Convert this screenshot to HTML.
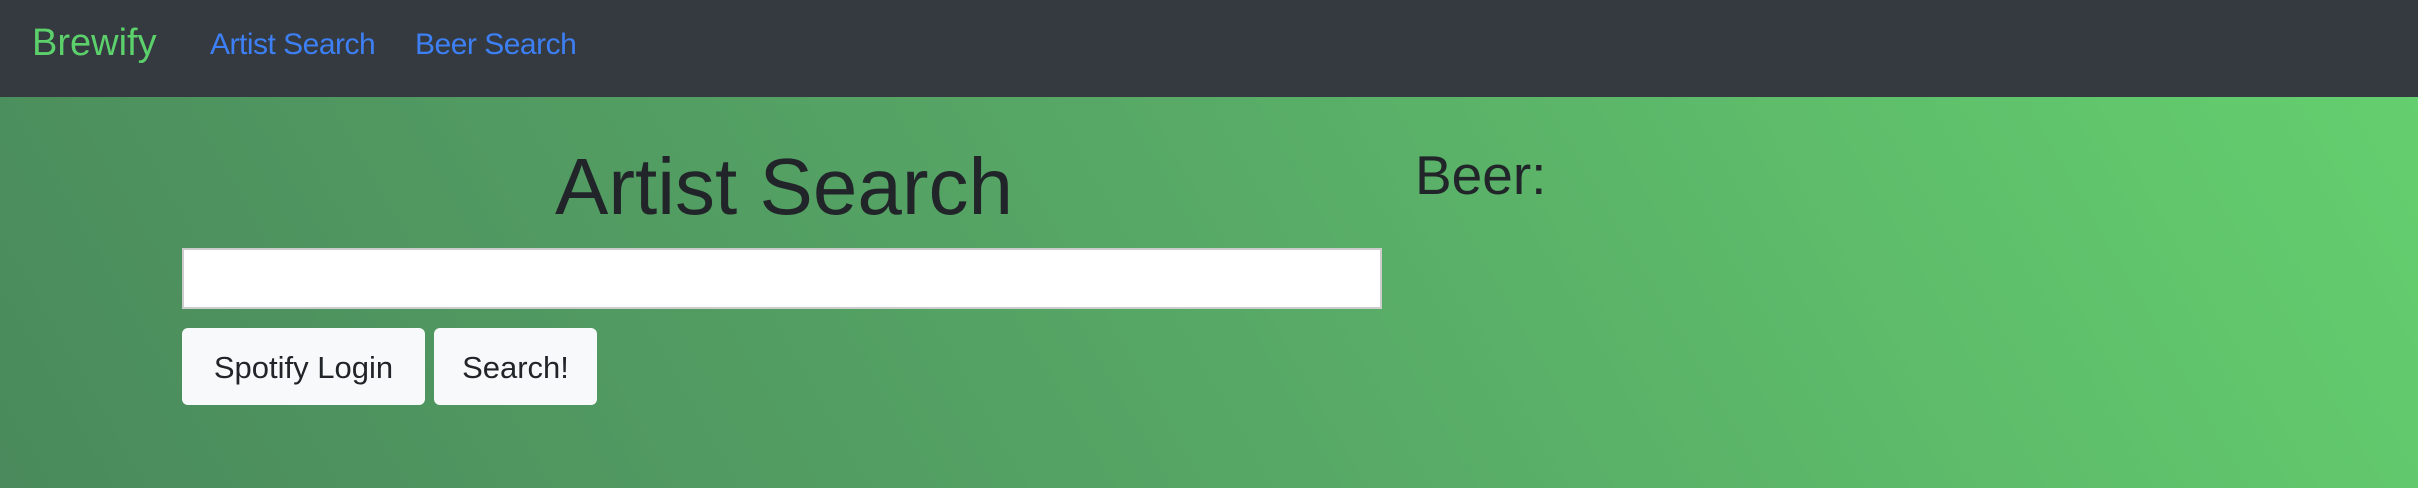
<!DOCTYPE html>
<html><head><style>
body{margin:0;width:2418px;height:488px;overflow:hidden;font-family:"Liberation Sans",sans-serif;}
.nav{height:97px;background:#343a40;position:relative}
.nav span{position:absolute;top:28px;font-size:30px}
.main{position:relative;height:391px;background:linear-gradient(60deg,#4a8a5c 0%,#57a866 50%,#64cf6e 100%)}
.h{position:absolute;left:520px;top:44px;width:528px;text-align:center;font-size:80px;color:#212529}
.beer{position:absolute;left:1415px;top:46px;font-size:55px;color:#212529}
.in{position:absolute;left:182px;top:151px;width:1196px;height:57px;background:#fff;border:2px solid #ccc}
.b{position:absolute;top:231px;height:77px;background:#f8f9fa;border-radius:6px;font-size:31px;color:#212529;line-height:79px;text-align:center}
</style></head><body>
<div class="nav">
<span style="left:32px;top:22px;font-size:38px;color:#5cd06b">Brewify</span>
<span style="left:210px;color:#3d7ff5;letter-spacing:-0.5px">Artist Search</span>
<span style="left:415px;color:#3d7ff5;letter-spacing:-0.5px">Beer Search</span>
</div>
<div class="main">
<div class="h">Artist Search</div>
<div class="beer">Beer:</div>
<div class="in"></div>
<div class="b" style="left:182px;width:243px">Spotify Login</div>
<div class="b" style="left:434px;width:163px">Search!</div>
</div>
</body></html>
